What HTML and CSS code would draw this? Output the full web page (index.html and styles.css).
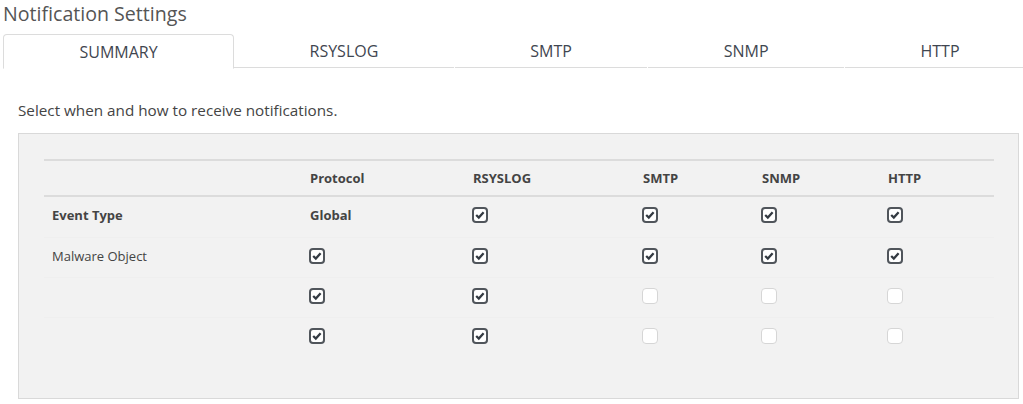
FILE: index.html
```html
<!DOCTYPE html>
<html lang="en">
<head>
  <meta charset="UTF-8">
  <title>Notification Settings</title>
  <link rel="stylesheet" href="styles.css">
</head>
<body>

  <h1 class="page-title">Notification Settings</h1>

  <div class="tabs">
    <div class="tab active">SUMMARY</div>
    <div class="tab">RSYSLOG</div>
    <div class="tab">SMTP</div>
    <div class="tab">SNMP</div>
    <div class="tab">HTTP</div>
  </div>

  <div class="content">
    <p class="intro">Select when and how to receive notifications.</p>

    <div class="panel">
      <div class="grid">
        <div class="row head">
          <div class="cell"></div>
          <div class="cell">Protocol</div>
          <div class="cell">RSYSLOG</div>
          <div class="cell">SMTP</div>
          <div class="cell">SNMP</div>
          <div class="cell">HTTP</div>
        </div>

        <div class="row">
          <div class="cell bold">Event Type</div>
          <div class="cell bold">Global</div>
          <div class="cell"><span class="check on"><svg viewBox="0 0 12 12"><path d="M2.2 6 L4.8 8.5 L9.6 3.3"/></svg></span></div>
          <div class="cell"><span class="check on"><svg viewBox="0 0 12 12"><path d="M2.2 6 L4.8 8.5 L9.6 3.3"/></svg></span></div>
          <div class="cell"><span class="check on"><svg viewBox="0 0 12 12"><path d="M2.2 6 L4.8 8.5 L9.6 3.3"/></svg></span></div>
          <div class="cell"><span class="check on"><svg viewBox="0 0 12 12"><path d="M2.2 6 L4.8 8.5 L9.6 3.3"/></svg></span></div>
        </div>

        <div class="row">
          <div class="cell">Malware Object</div>
          <div class="cell"><span class="check on"><svg viewBox="0 0 12 12"><path d="M2.2 6 L4.8 8.5 L9.6 3.3"/></svg></span></div>
          <div class="cell"><span class="check on"><svg viewBox="0 0 12 12"><path d="M2.2 6 L4.8 8.5 L9.6 3.3"/></svg></span></div>
          <div class="cell"><span class="check on"><svg viewBox="0 0 12 12"><path d="M2.2 6 L4.8 8.5 L9.6 3.3"/></svg></span></div>
          <div class="cell"><span class="check on"><svg viewBox="0 0 12 12"><path d="M2.2 6 L4.8 8.5 L9.6 3.3"/></svg></span></div>
          <div class="cell"><span class="check on"><svg viewBox="0 0 12 12"><path d="M2.2 6 L4.8 8.5 L9.6 3.3"/></svg></span></div>
        </div>

        <div class="row">
          <div class="cell"></div>
          <div class="cell"><span class="check on"><svg viewBox="0 0 12 12"><path d="M2.2 6 L4.8 8.5 L9.6 3.3"/></svg></span></div>
          <div class="cell"><span class="check on"><svg viewBox="0 0 12 12"><path d="M2.2 6 L4.8 8.5 L9.6 3.3"/></svg></span></div>
          <div class="cell"><span class="check"></span></div>
          <div class="cell"><span class="check"></span></div>
          <div class="cell"><span class="check"></span></div>
        </div>

        <div class="row">
          <div class="cell"></div>
          <div class="cell"><span class="check on"><svg viewBox="0 0 12 12"><path d="M2.2 6 L4.8 8.5 L9.6 3.3"/></svg></span></div>
          <div class="cell"><span class="check on"><svg viewBox="0 0 12 12"><path d="M2.2 6 L4.8 8.5 L9.6 3.3"/></svg></span></div>
          <div class="cell"><span class="check"></span></div>
          <div class="cell"><span class="check"></span></div>
          <div class="cell"><span class="check"></span></div>
        </div>
      </div>
    </div>
  </div>

</body>
</html>
```

FILE: styles.css
```css
html, body {
  margin: 0;
  padding: 0;
  background: #fff;
  font-family: "Open Sans", "Liberation Sans", sans-serif;
  color: #444;
  overflow: hidden;
}

.page-title {
  margin: 0 0 6px;
  padding-left: 3px;
  font-size: 19.6px;
  font-weight: normal;
  line-height: 28px;
  color: #555;
}

/* tab bar */
.tabs {
  display: flex;
  gap: 1px;
  width: 1032px;
  margin-left: 3px;
}

.tab {
  flex: 1 1 auto;
  height: 34px;
  line-height: 34px;
  text-align: center;
  font-size: 16px;
  color: #3f4650;
  border-bottom: 1px solid #dcdcdc;
  box-sizing: border-box;
}

.tab.active {
  height: 35px;
  border: 1px solid #dcdcdc;
  border-bottom-color: transparent;
  border-radius: 4px 4px 0 0;
  line-height: 35px;
  margin-right: -1px;
  margin-bottom: -1px;
}

.content {
  padding: 0 4px 0 18px;
}

.intro {
  margin: 32px 0 13px;
  font-size: 15.25px;
  line-height: 20px;
  color: #444;
}

.panel {
  height: 266px;
  box-sizing: border-box;
  background: #f2f2f2;
  border: 1px solid #d9d9d9;
  padding: 25px 24px 0 25px;
}

.grid {
  border-top: 2px solid #dcdcdc;
}

.row {
  display: grid;
  grid-template-columns: 258px 163px 170px 119px 126px 1fr;
  height: 40px;
  border-top: 1px solid #efefef;
  box-sizing: border-box;
  font-size: 13px;
}

.row.head {
  height: 36px;
  border-top: none;
  border-bottom: 2px solid #dcdcdc;
  font-weight: bold;
  align-items: center;
}

.row.head + .row {
  border-top: none;
  height: 40px;
}

.cell {
  padding: 10px 8px 0;
  line-height: 16px;
  color: #444;
}

.row.head .cell {
  padding-top: 0;
}

.cell.bold {
  font-weight: bold;
}

.check {
  display: block;
  width: 16px;
  height: 16px;
  margin: 0 0 0 -1px;
  box-sizing: border-box;
  border: 1px solid #d6d6d6;
  border-radius: 4px;
  background: #fff;
}

.check.on {
  border: 2px solid #50555b;
}

.check svg {
  display: block;
  width: 12px;
  height: 12px;
}

.check svg path {
  fill: none;
  stroke: #333a42;
  stroke-width: 2.3;
}
```
